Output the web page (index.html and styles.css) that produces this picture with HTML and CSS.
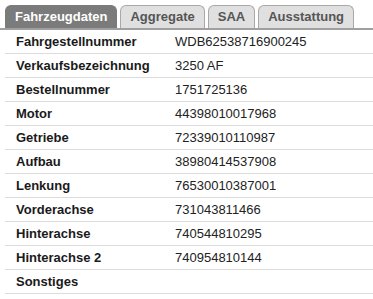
FILE: index.html
```html
<!DOCTYPE html>
<html lang="de">
<head>
    <meta charset="UTF-8">
    <title>Fahrzeugdaten</title>
    <link rel="stylesheet" href="styles.css">
</head>
<body>

    <div class="tabs">
        <div class="tab active">Fahrzeugdaten</div>
        <div class="tab">Aggregate</div>
        <div class="tab">SAA</div>
        <div class="tab">Ausstattung</div>
    </div>

    <!-- Fahrzeugdaten -->
    <div class="data-table">
        <div class="row"><span class="label">Fahrgestellnummer</span><span class="value">WDB62538716900245</span></div>
        <div class="row"><span class="label">Verkaufsbezeichnung</span><span class="value">3250 AF</span></div>
        <div class="row"><span class="label">Bestellnummer</span><span class="value">1751725136</span></div>
        <div class="row"><span class="label">Motor</span><span class="value">44398010017968</span></div>
        <div class="row"><span class="label">Getriebe</span><span class="value">72339010110987</span></div>
        <div class="row"><span class="label">Aufbau</span><span class="value">38980414537908</span></div>
        <div class="row"><span class="label">Lenkung</span><span class="value">76530010387001</span></div>
        <div class="row"><span class="label">Vorderachse</span><span class="value">731043811466</span></div>
        <div class="row"><span class="label">Hinterachse</span><span class="value">740544810295</span></div>
        <div class="row"><span class="label">Hinterachse 2</span><span class="value">740954810144</span></div>
        <div class="row"><span class="label">Sonstiges</span><span class="value"></span></div>
    </div>

</body>
</html>
```

FILE: styles.css
```css
body {
    font-family: 'Liberation Sans', Arial, sans-serif;
    font-size: 13px;
    color: #1a1a1a;
    background: #fff;
    margin: 0;
    padding: 5px 0 0 0;
}

.tabs {
    display: flex;
    gap: 3px;
    padding-left: 5px;
    border-bottom: 2px solid #a0a0a0;
}

.tab {
    height: 22px;
    line-height: 22px;
    padding: 0 9px;
    background: #e0e0e0;
    border: 1px solid #a8a8a8;
    border-bottom: none;
    border-radius: 6px 6px 0 0;
    color: #555;
    font-weight: bold;
    text-align: center;
}

.tab.active {
    background: #7b7b7b;
    border-color: #7b7b7b;
    color: #fff;
}

.data-table {
    margin-left: 5px;
}

.row {
    display: flex;
    height: 23px;
    line-height: 23px;
    border-bottom: 1px solid #dcdcdc;
}

.label {
    width: 159px;
    padding-left: 11px;
    font-weight: bold;
}

.value {
    color: #222;
}
```
